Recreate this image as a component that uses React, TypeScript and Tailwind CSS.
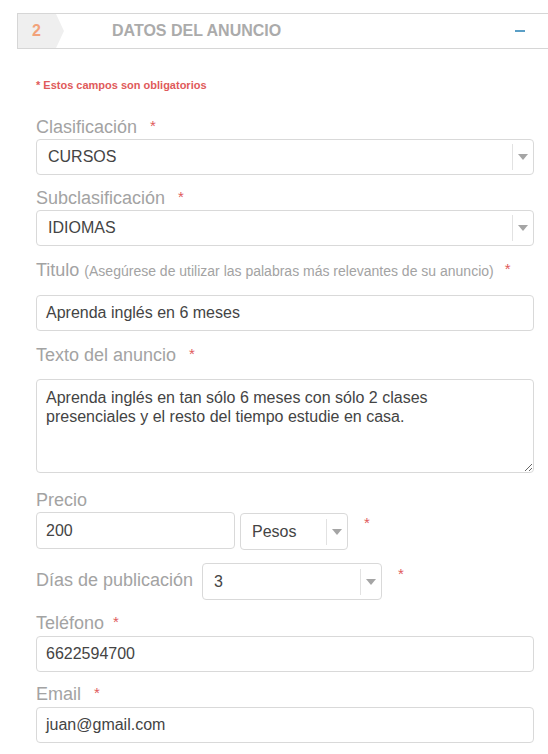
import type { ReactNode } from 'react'

const font = { fontFamily: '"Liberation Sans", Arial, sans-serif' }

function Star({ className = '' }: { className?: string }) {
  return <span className={`align-top text-[15px] leading-[18px] text-[#e05a5a] ${className}`}>*</span>
}

function Label({ children, className = '' }: { children: ReactNode; className?: string }) {
  return <div className={`h-[20px] text-[18px] leading-[20px] text-[#a3a3a3] ${className}`}>{children}</div>
}

function SelectBox({ value, className = '' }: { value: string; className?: string }) {
  return (
    <div className={`flex items-center rounded-[4px] border border-[#d9d9d9] bg-white ${className}`}>
      <span className="flex-1 pl-[11px] text-[16px] text-[#444]">{value}</span>
      <div className="flex h-[26px] w-[21px] items-center justify-center border-l border-[#e2e2e2]">
        <svg width="10" height="6" viewBox="0 0 10 6">
          <path d="M0 0 L10 0 L5 6 Z" fill="#a5a5a5" />
        </svg>
      </div>
    </div>
  )
}

function TextBox({ value, className = '' }: { value: string; className?: string }) {
  return (
    <div className={`flex items-center rounded-[4px] border border-[#d9d9d9] bg-white px-[9px] text-[16px] text-[#444] ${className}`}>
      {value}
    </div>
  )
}

export default function App() {
  return (
    <div className="min-h-[754px] w-[548px] overflow-hidden bg-white pt-[13px]" style={font}>
      <div className="ml-[17px] flex h-[36px] items-center border-y border-l border-[#d6d6d6]">
        <div className="flex h-full w-[46px] items-center bg-[#efefef] pl-[14px] text-[16px] font-bold text-[#f2a27a] [clip-path:polygon(0_0,38px_0,46px_50%,38px_100%,0_100%)]">
          2
        </div>
        <div className="ml-[48px] flex-1 text-[16px] font-bold text-[#ababab]">DATOS DEL ANUNCIO</div>
        <div className="mr-[23px] h-[2px] w-[10px] bg-[#5a9fc6]" />
      </div>

      <div className="pl-[36px] pr-[14px]">
        <div className="mt-[30px] text-[11px] font-bold leading-[12px] text-[#e05a5a]">* Estos campos son obligatorios</div>

        <Label className="mt-[26px]">
          Clasificación <Star className="ml-[8px]" />
        </Label>
        <SelectBox value="CURSOS" className="mt-[2px] h-[36px]" />

        <Label className="mt-[13px]">
          Subclasificación <Star className="ml-[8px]" />
        </Label>
        <SelectBox value="IDIOMAS" className="mt-[2px] h-[36px]" />

        <Label className="mt-[14px]">
          Titulo <span className="text-[14px]">(Asegúrese de utilizar las palabras más relevantes de su anuncio)</span>
          <Star className="ml-[11px]" />
        </Label>
        <TextBox value="Aprenda inglés en 6 meses" className="mt-[15px] h-[36px]" />

        <Label className="mt-[14px]">
          Texto del anuncio <Star className="ml-[8px]" />
        </Label>
        <textarea
          className="mt-[14px] block h-[94px] w-full rounded-[4px] border border-[#d9d9d9] px-[9px] pt-[8px] text-[16px] leading-[19px] text-[#444] outline-none"
          style={font}
          defaultValue={'Aprenda inglés en tan sólo 6 meses con sólo 2 clases\npresenciales y el resto del tiempo estudie en casa.'}
        />

        <Label className="mt-[17px]">Precio</Label>
        <div className="mt-[2px] flex items-start">
          <TextBox value="200" className="h-[37px] w-[199px]" />
          <SelectBox value="Pesos" className="ml-[5px] mt-[1px] h-[37px] w-[108px]" />
          <Star className="ml-[16px] mt-[2px]" />
        </div>

        <div className="mt-[13px] flex items-start">
          <Label className="mt-[7px]">Días de publicación</Label>
          <SelectBox value="3" className="ml-[9px] h-[37px] w-[180px]" />
          <Star className="ml-[16px] mt-[2px]" />
        </div>

        <Label className="mt-[13px]">
          Teléfono <Star className="ml-[4px]" />
        </Label>
        <TextBox value="6622594700" className="mt-[3px] h-[36px]" />

        <Label className="mt-[12px]">
          Email <Star className="ml-[8px]" />
        </Label>
        <TextBox value="juan@gmail.com" className="mt-[3px] h-[36px]" />
      </div>
    </div>
  )
}
